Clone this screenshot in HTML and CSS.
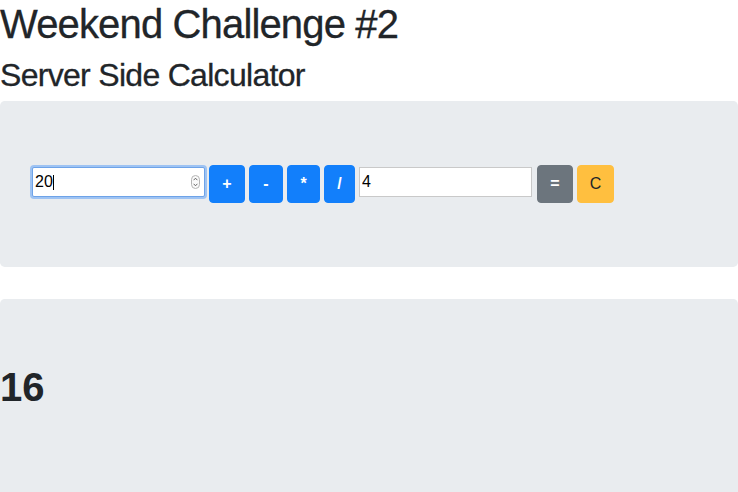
FILE: index.html
```html
<!DOCTYPE html>
<html lang="en">
<head>
<meta charset="utf-8">
<title>Server Side Calculator</title>
<link rel="stylesheet" href="styles.css">
</head>
<body>
<h1 class="title">Weekend Challenge #2</h1>
<h2 class="subtitle">Server Side Calculator</h2>
<div class="jumbotron calc">
  <div class="calc-row">
    <div class="num-wrap">
      <input class="num-input focused" type="text" value="20">
      <span class="caret"></span>
      <svg class="spinner" width="9" height="14" viewBox="0 0 9 14" aria-hidden="true">
        <rect x="0.5" y="0.5" width="8" height="13" rx="4" fill="#fafafa" stroke="#b5b5b5"/>
        <path d="M2.6 5.2 L4.5 3.2 L6.4 5.2" fill="none" stroke="#555" stroke-width="0.9"/>
        <path d="M2.6 8.8 L4.5 10.8 L6.4 8.8" fill="none" stroke="#555" stroke-width="0.9"/>
      </svg>
    </div>
    <button class="btn btn-primary w-plus">+</button>
    <button class="btn btn-primary w-minus">-</button>
    <button class="btn btn-primary w-times">*</button>
    <button class="btn btn-primary w-div">/</button>
    <input class="num-input" type="text" value="4">
    <button class="btn btn-secondary w-eq">=</button>
    <button class="btn btn-warning w-c">C</button>
  </div>
</div>
<div class="jumbotron result">
  <h1 class="result-value">16</h1>
</div>
</body>
</html>
```
FILE: styles.css
```css
html, body {
  margin: 0;
  padding: 0;
  background: #fff;
  color: #212529;
  font-family: "Liberation Sans", Arial, sans-serif;
  overflow: hidden;
}

.title {
  margin: 0 0 8px;
  font-size: 40px;
  line-height: 48px;
  font-weight: 400;
  letter-spacing: -0.85px;
  -webkit-text-stroke: 0.3px #212529;
}

.subtitle {
  margin: 0 0 6.6px;
  font-size: 32px;
  line-height: 38.4px;
  font-weight: 400;
  letter-spacing: -0.7px;
  -webkit-text-stroke: 0.3px #212529;
}

.jumbotron {
  background: #e9ecef;
  border-radius: 4.8px;
}

.calc {
  padding: 64px 32px;
  margin-bottom: 32px;
}

.calc-row {
  display: flex;
  align-items: flex-start;
  gap: 4px;
  height: 38px;
}

.num-wrap {
  position: relative;
  margin-top: 2px;
}

.num-input {
  box-sizing: border-box;
  width: 173px;
  height: 30px;
  margin: 2px 0 0;
  padding: 0 0 0 2px;
  border: 1px solid #c9c9c9;
  border-radius: 0;
  background: #fff;
  color: #000;
  font-family: "Liberation Sans", Arial, sans-serif;
  font-size: 16px;
  outline: none;
}

.num-wrap .num-input {
  margin: 0;
}

.num-input.focused {
  border: 1px solid #6ea3e8;
  border-radius: 2px;
  box-shadow: 0 0 0 2px #9ec3f3;
}

.caret {
  position: absolute;
  left: 21px;
  top: 8px;
  width: 1px;
  height: 15px;
  background: #000;
}

.spinner {
  position: absolute;
  right: 5px;
  top: 8px;
}

.btn {
  box-sizing: border-box;
  height: 38px;
  padding: 0;
  border: 1px solid transparent;
  border-radius: 4px;
  font-family: "Liberation Sans", Arial, sans-serif;
  font-size: 16px;
  line-height: 24px;
  color: #fff;
  text-align: center;
}

.btn-primary {
  background: #127ffb;
  border-color: #127ffb;
  font-weight: 700;
}

.btn-secondary {
  background: #6c757d;
  border-color: #6c757d;
  font-weight: 700;
}

.btn-warning {
  background: #ffbf3f;
  border-color: #ffbf3f;
  color: #212529;
}

.w-plus { width: 36px; }
.w-minus { width: 34px; }
.w-times { width: 33px; }
.w-div { width: 31px; }
.w-eq { width: 36px; margin-left: 1px; }
.w-c { width: 37px; }

.result {
  padding: 64px 0 80px;
}

.result-value {
  margin: 0 0 8px;
  font-size: 40px;
  line-height: 48px;
  font-weight: 700;
}
```
